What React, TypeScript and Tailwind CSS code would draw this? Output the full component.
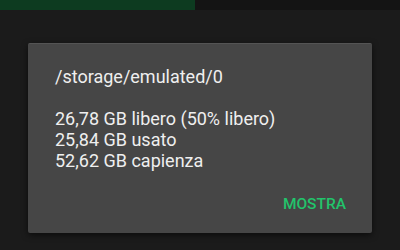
export default function App() {
  const lines = [
    '26,78 GB libero (50% libero)',
    '25,84 GB usato',
    '52,62 GB capienza',
  ]

  return (
    <div
      className="flex h-[250px] w-[400px] flex-col overflow-hidden bg-[#1b1b1b]"
      style={{ fontFamily: 'Roboto, "Liberation Sans", sans-serif' }}
    >
      {/* Top strip peeking behind the dialog */}
      <div className="flex h-[10px] shrink-0">
        <div className="w-[195px] bg-[#0d3b20]" />
        <div className="flex-1 bg-[#141414]" />
      </div>

      {/* Storage dialog */}
      <div className="ml-[28px] mt-[33px] flex h-[190px] w-[344px] flex-col rounded-[2px] border-t border-[#545454] bg-[#464646] shadow-[0_2px_6px_rgba(0,0,0,0.6)]">
        <div className="pl-[27px] pr-[24px] pt-[22px] text-[18px] leading-[21px] text-[#efefef]">
          <div>/storage/emulated/0</div>
          <div className="h-[21px]" />
          {lines.map((line) => (
            <div key={line}>{line}</div>
          ))}
        </div>
        <div className="mt-auto flex justify-end pb-[20px] pr-[26px]">
          <span className="text-[15.5px] font-medium leading-[18px] text-[#22c46b]">
            MOSTRA
          </span>
        </div>
      </div>
    </div>
  )
}
